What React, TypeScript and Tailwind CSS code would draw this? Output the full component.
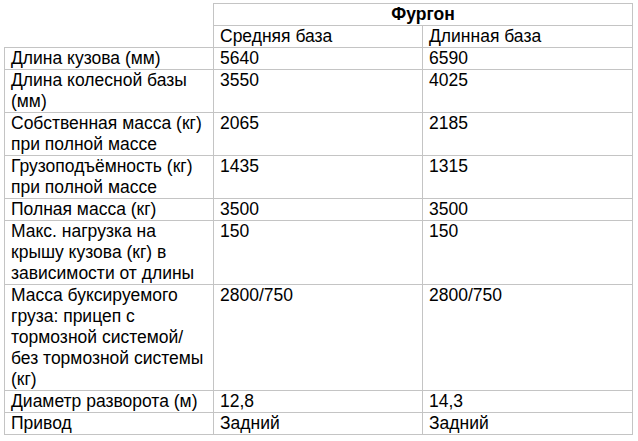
import React from "react";

const rows: [string[], string, string][] = [
  [["Длина кузова (мм)"], "5640", "6590"],
  [["Длина колесной базы", "(мм)"], "3550", "4025"],
  [["Собственная масса (кг)", "при полной массе"], "2065", "2185"],
  [["Грузоподъёмность (кг)", "при полной массе"], "1435", "1315"],
  [["Полная масса (кг)"], "3500", "3500"],
  [["Макс. нагрузка на", "крышу кузова (кг) в", "зависимости от длины"], "150", "150"],
  [
    ["Масса буксируемого", "груза: прицеп с", "тормозной системой/", "без тормозной системы", "(кг)"],
    "2800/750",
    "2800/750",
  ],
  [["Диаметр разворота (м)"], "12,8", "14,3"],
  [["Привод"], "Задний", "Задний"],
];

const base = "border border-[#c4c4c4] px-[6px] py-0 align-top";
const cell = `${base} text-left font-normal`;

export default function App() {
  return (
    <div className="w-[638px] h-[441px] bg-white pt-[3px] pl-[4px]" style={{ fontFamily: '"Liberation Sans", Arial, sans-serif' }}>
      <table className="border-collapse table-fixed w-[628px] text-[17.5px] leading-[21px] text-black">
        <colgroup>
          <col className="w-[209px]" />
          <col className="w-[209px]" />
          <col className="w-[210px]" />
        </colgroup>
        <tbody>
          <tr>
            <td rowSpan={2} className="border-b border-r border-[#c4c4c4]"></td>
            <th colSpan={2} className={`${base} text-center font-bold`}>
              Фургон
            </th>
          </tr>
          <tr>
            <td className={cell}>Средняя база</td>
            <td className={cell}>Длинная база</td>
          </tr>
          {rows.map(([label, a, b], i) => (
            <tr key={i}>
              <td className={cell}>
                {label.map((l, j) => (
                  <div key={j}>{l}</div>
                ))}
              </td>
              <td className={cell}>{a}</td>
              <td className={cell}>{b}</td>
            </tr>
          ))}
        </tbody>
      </table>
    </div>
  );
}
